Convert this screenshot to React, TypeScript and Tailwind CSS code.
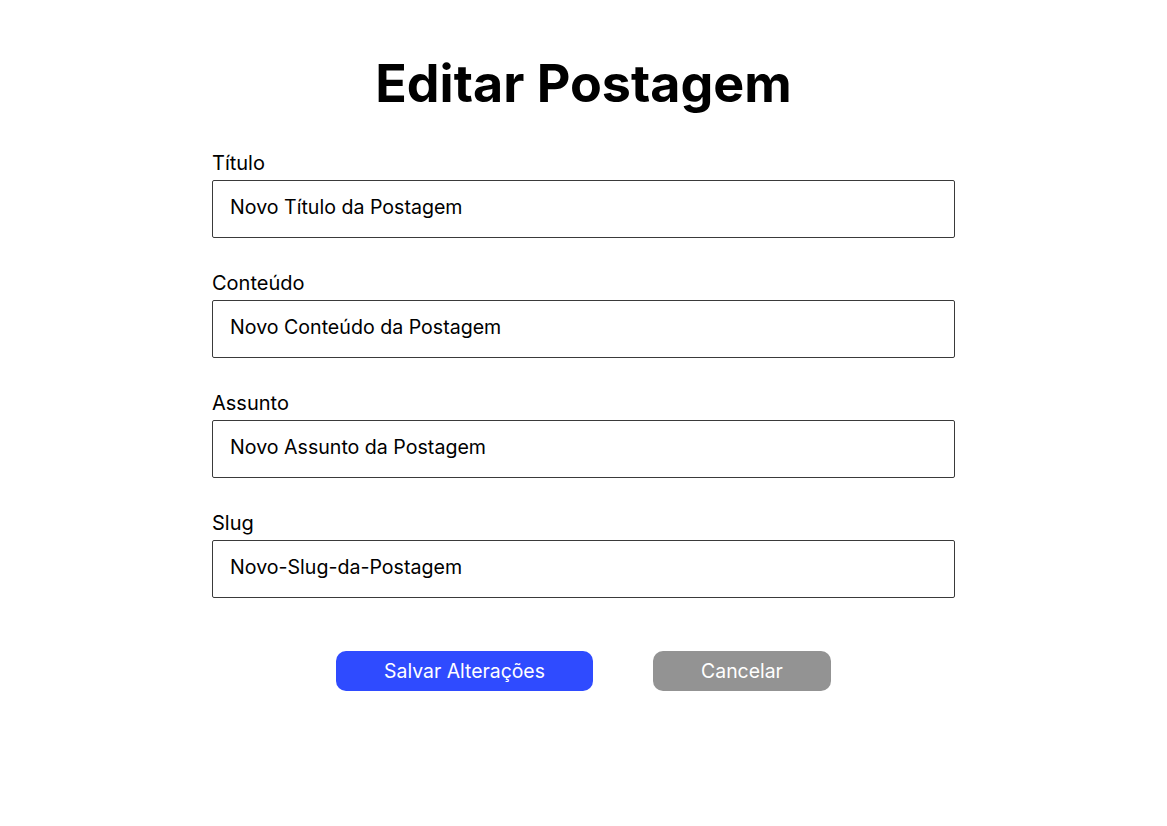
import React, { useState } from 'react';

const Field: React.FC<{ label: string; value: string; onChange: (v: string) => void }> = ({ label, value, onChange }) => {
  return (
    <div className="flex flex-col">
      <label className="pt-[1px] text-[20px] leading-[24px] text-black">{label}</label>
      <input
        value={value}
        onChange={(e) => onChange(e.target.value)}
        className="mt-[5px] h-[58px] w-full rounded-[2px] border border-[#3a3a3a] px-[17px] pb-[4px] text-[19.6px] text-black outline-none"
      />
    </div>
  );
};

const App: React.FC = () => {
  const [titulo, setTitulo] = useState('Novo Título da Postagem');
  const [conteudo, setConteudo] = useState('Novo Conteúdo da Postagem');
  const [assunto, setAssunto] = useState('Novo Assunto da Postagem');
  const [slug, setSlug] = useState('Novo-Slug-da-Postagem');

  return (
    <div className="min-h-screen bg-white font-['Inter',sans-serif]">
      <div className="mx-auto w-[743px] pt-[58px]">
        <h1 className="text-center text-[52px] font-bold leading-[52px] text-black">Editar Postagem</h1>

        <div className="mt-[40px] flex flex-col gap-[32px]">
          <Field label="Título" value={titulo} onChange={setTitulo} />
          <Field label="Conteúdo" value={conteudo} onChange={setConteudo} />
          <Field label="Assunto" value={assunto} onChange={setAssunto} />
          <Field label="Slug" value={slug} onChange={setSlug} />
        </div>

        <div className="mt-[53px] flex justify-center gap-[60px]">
          <button className="h-[40px] w-[257px] rounded-[10px] bg-[#2f4bff] pt-[1px] text-[19.4px] text-white">
            Salvar Alterações
          </button>
          <button className="h-[40px] w-[178px] rounded-[10px] bg-[#939393] pt-[1px] text-[19.4px] text-white">
            Cancelar
          </button>
        </div>
      </div>
    </div>
  );
};

export default App;
